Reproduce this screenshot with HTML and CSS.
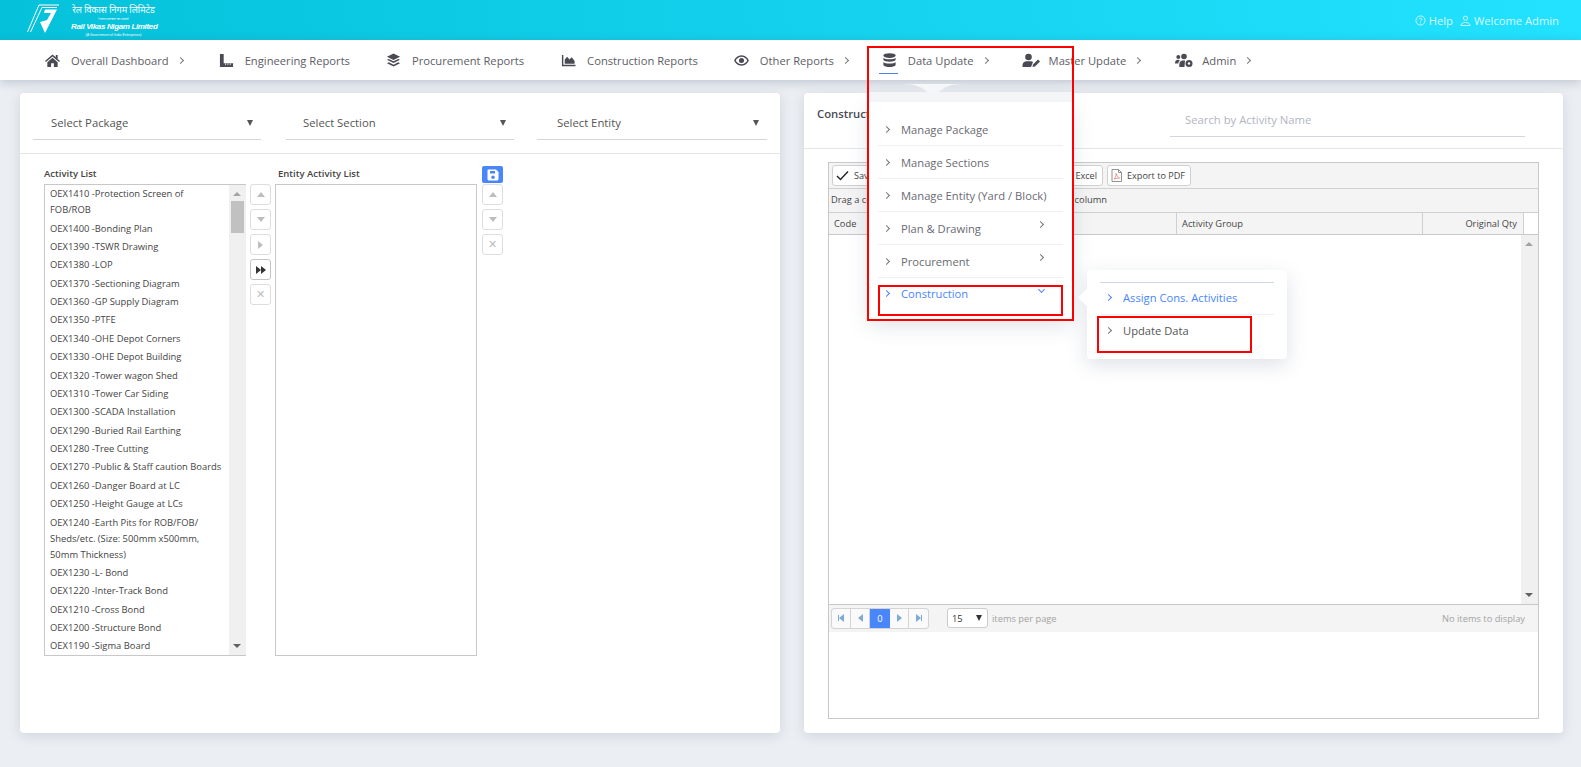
FILE: index.html
```html
<!DOCTYPE html>
<html lang="en">
<head>
    <meta charset="UTF-8">
    <title>Rail Vikas Nigam Limited</title>
    <link rel="stylesheet" href="styles.css">
</head>
<body>
    <header class="topbar">
        <div class="logo">
            <svg class="logo-mark" width="34" height="34" viewBox="0 0 34 34">
                <path d="M0.500 30 L12 3 H32 M3.500 30 L15 5.500 H30" fill="none" stroke="#fff" stroke-width="1"/>
                <path d="M18 7.500 H30 L18 31 L13 20 L20 18 L24 11 H17 Z" fill="#fff"/>
            </svg>
            <div class="logo-text">
                <div class="logo-hi">रेल विकास निगम लिमिटेड</div>
                <div class="logo-sub">(भारत सरकार का उद्यम)</div>
                <div class="logo-en">Rail Vikas Nigam Limited</div>
                <div class="logo-gov">(A Government of India Enterprises)</div>
            </div>
        </div>
        <div class="top-links">
            <svg width="11" height="11" viewBox="0 0 12 12"><circle cx="6" cy="6" r="5" fill="none" stroke="#d8f8ff" stroke-width="1"/><path d="M4.500 4.800 C4.500 3 7.500 3 7.500 4.800 C7.500 6 6 5.800 6 7.200 M6 8.300 V9.200" fill="none" stroke="#d8f8ff" stroke-width="1"/></svg>
            <span class="top-link">Help</span>
            <svg class="user-ico" width="11" height="11" viewBox="0 0 12 12"><circle cx="6" cy="3.500" r="2.300" fill="none" stroke="#d8f8ff" stroke-width="1"/><path d="M1 11.500 C1 7 11 7 11 11.500 Z" fill="none" stroke="#d8f8ff" stroke-width="1"/></svg>
            <span class="top-link">Welcome Admin</span>
        </div>
    </header>

    <nav class="navbar">
        <a class="nav-item n-dash">
            <svg class="nav-ico" viewBox="0 0 16 14"><path d="M8 0.500 L0 7.500 L1 8.700 L8 2.600 L15 8.700 L16 7.500 L13.500 5.300 V1 H11.500 V3.500 Z M8 4 L2.500 8.800 V14 H6.500 V10 H9.500 V14 H13.500 V8.800 Z"/></svg>
            <span>Overall Dashboard</span><i class="chev"></i>
        </a>
        <a class="nav-item n-eng">
            <svg class="nav-ico" viewBox="0 0 16 16"><path d="M1 1 H5 V11 H15 V15 H1 Z"/><path d="M7 11 V13 M9.500 11 V13 M12 11 V13" stroke="#fff" stroke-width="0.800"/></svg>
            <span>Engineering Reports</span>
        </a>
        <a class="nav-item n-proc">
            <svg class="nav-ico" viewBox="0 0 16 16"><path d="M8 0.500 L15 4 L8 7.500 L1 4 Z M1 7.200 L3 6.300 L8 8.800 L13 6.300 L15 7.200 L8 10.700 Z M1 10.800 L3 9.900 L8 12.400 L13 9.900 L15 10.800 L8 14.300 Z"/></svg>
            <span>Procurement Reports</span>
        </a>
        <a class="nav-item n-cons">
            <svg class="nav-ico" viewBox="0 0 16 14"><path d="M1 1 H2.500 V11.500 H15.500 V13 H1 Z"/><path d="M4 10.500 V6 L6.500 3 L9 6 L11.500 3.500 L14.500 7.500 V10.500 Z"/></svg>
            <span>Construction Reports</span>
        </a>
        <a class="nav-item n-other">
            <svg class="nav-ico" viewBox="0 0 16 12"><path fill-rule="evenodd" d="M8 0.500 C12 0.500 14.800 3.500 15.800 6 C14.800 8.500 12 11.500 8 11.500 C4 11.500 1.200 8.500 0.200 6 C1.200 3.500 4 0.500 8 0.500 Z M8 2 C5 2 2.900 4 1.900 6 C2.900 8 5 10 8 10 C11 10 13.100 8 14.100 6 C13.100 4 11 2 8 2 Z"/><circle cx="8" cy="6" r="2.700"/></svg>
            <span>Other Reports</span><i class="chev"></i>
        </a>
        <a class="nav-item n-data active">
            <svg class="nav-ico" viewBox="0 0 14 16"><ellipse cx="7" cy="2.700" rx="6.500" ry="2.500"/><path d="M0.500 5 C2 7.200 12 7.200 13.500 5 V7.500 C12 9.800 2 9.800 0.500 7.500 Z M0.500 9.500 C2 11.700 12 11.700 13.500 9.500 V13 C12 15.600 2 15.600 0.500 13 Z"/></svg>
            <span>Data Update</span><i class="chev"></i>
        </a>
        <a class="nav-item n-master">
            <svg class="nav-ico wide" viewBox="0 0 18 14"><circle cx="6.500" cy="3.500" r="3.300"/><path d="M0.500 13.500 V11.500 C0.500 9 2.500 7.700 4.500 7.700 H8.500 C9.500 7.700 10.500 8 11 8.500 L9 13.500 Z"/><path d="M10.500 13.500 L11 11 L16 6 L18 8 L13 13 Z"/></svg>
            <span>Master Update</span><i class="chev"></i>
        </a>
        <a class="nav-item n-admin">
            <svg class="nav-ico wide" viewBox="0 0 18 14"><circle cx="3.300" cy="3.500" r="2"/><circle cx="9" cy="3" r="2.800"/><path d="M0 10 C0 7 1.500 6.300 3 6.300 C3.800 6.300 4.500 6.700 4.800 7 C3.800 8 3.300 9 3.200 10 Z M4.300 13.500 V11 C4.300 8.500 6 7 7.500 7 H10 L9.500 13.500 Z"/><circle cx="14" cy="10" r="3.500"/><circle cx="14" cy="10" r="1.200" fill="#fff"/></svg>
            <span>Admin</span><i class="chev"></i>
        </a>
    </nav>

    <main class="content">
        <section class="card left-card">
            <div class="select-row">
                <div class="fake-select s1"><span>Select Package</span><b class="tri"></b></div>
                <div class="fake-select s2"><span>Select Section</span><b class="tri"></b></div>
                <div class="fake-select s3"><span>Select Entity</span><b class="tri"></b></div>
            </div>
            <div class="lists">
                <div class="list-col">
                    <div class="list-label">Activity List</div>
                    <div class="listbox with-scroll">
                        <ul class="items">
                            <li>OEX1410 -Protection Screen of<br>FOB/ROB</li>
                            <li>OEX1400 -Bonding Plan</li>
                            <li>OEX1390 -TSWR Drawing</li>
                            <li>OEX1380 -LOP</li>
                            <li>OEX1370 -Sectioning Diagram</li>
                            <li>OEX1360 -GP Supply Diagram</li>
                            <li>OEX1350 -PTFE</li>
                            <li>OEX1340 -OHE Depot Corners</li>
                            <li>OEX1330 -OHE Depot Building</li>
                            <li>OEX1320 -Tower wagon Shed</li>
                            <li>OEX1310 -Tower Car Siding</li>
                            <li>OEX1300 -SCADA Installation</li>
                            <li>OEX1290 -Buried Rail Earthing</li>
                            <li>OEX1280 -Tree Cutting</li>
                            <li>OEX1270 -Public &amp; Staff caution Boards</li>
                            <li>OEX1260 -Danger Board at LC</li>
                            <li>OEX1250 -Height Gauge at LCs</li>
                            <li>OEX1240 -Earth Pits for ROB/FOB/<br>Sheds/etc. (Size: 500mm x500mm,<br>50mm Thickness)</li>
                            <li>OEX1230 -L- Bond</li>
                            <li>OEX1220 -Inter-Track Bond</li>
                            <li>OEX1210 -Cross Bond</li>
                            <li>OEX1200 -Structure Bond</li>
                            <li>OEX1190 -Sigma Board</li>
                        </ul>
                        <div class="scrollbar">
                            <b class="arrow up"></b>
                            <div class="thumb"></div>
                            <b class="arrow down"></b>
                        </div>
                    </div>
                </div>
                <div class="tool-col">
                    <button class="tool"><b class="gl up"></b></button>
                    <button class="tool"><b class="gl down"></b></button>
                    <button class="tool"><b class="gl right"></b></button>
                    <button class="tool dark"><b class="gl right"></b><b class="gl right"></b></button>
                    <button class="tool"><span class="x">✕</span></button>
                </div>
                <div class="list-col entity">
                    <div class="list-label">Entity Activity List</div>
                    <div class="listbox"></div>
                </div>
                <div class="tool-col right-tools">
                    <button class="save-btn">
                        <svg width="12" height="12" viewBox="0 0 12 12"><path fill="#fff" fill-rule="evenodd" d="M1.500 0.500 H9 L11.500 3 V10 C11.500 10.800 10.800 11.500 10 11.500 H2 C1.200 11.500 0.500 10.800 0.500 10 V1.500 C0.500 1 1 0.500 1.500 0.500 Z M3 2 V4.500 H8 V2 Z M6 6.500 A1.800 1.800 0 1 0 6 10.100 A1.800 1.800 0 1 0 6 6.500 Z"/></svg>
                    </button>
                    <button class="tool"><b class="gl up"></b></button>
                    <button class="tool"><b class="gl down"></b></button>
                    <button class="tool"><span class="x">✕</span></button>
                </div>
            </div>
        </section>

        <section class="card right-card">
            <div class="right-head">
                <div class="right-title">Construction Activities</div>
                <div class="search">Search by Activity Name</div>
            </div>
            <div class="grid">
                <div class="grid-toolbar">
                    <button class="grid-btn btn-save">
                        <svg width="13" height="11" viewBox="0 0 13 11"><path d="M1 6 L4.500 9.500 L12 1.500" fill="none" stroke="#222" stroke-width="1.400"/></svg>
                        Save Changes
                    </button>
                    <button class="grid-btn btn-excel">Export to Excel</button>
                    <button class="grid-btn">
                        <svg width="11" height="13" viewBox="0 0 11 13"><path d="M1 0.500 H7.500 L10.500 3.500 V12.500 H1 Z M7.500 0.500 V3.500 H10.500" fill="#fff" stroke="#777" stroke-width="0.800"/><path d="M3 10 C5 8 5.500 6 5 4.500 C6 7 7 8.500 8.500 9 C6.500 9 4.500 9.500 3 10 Z" fill="none" stroke="#d9534f" stroke-width="0.600"/></svg>
                        Export to PDF
                    </button>
                </div>
                <div class="grid-group">Drag a column header and drop it here to group by that column</div>
                <div class="grid-header">
                    <div class="th th-code">Code</div>
                    <div class="th th-group">Activity Group</div>
                    <div class="th th-qty">Original Qty</div>
                    <div class="th th-sp"></div>
                </div>
                <div class="grid-body">
                    <div class="grid-scroll">
                        <b class="arrow up"></b>
                        <b class="arrow down"></b>
                    </div>
                </div>
                <div class="pager">
                    <div class="pager-btns">
                        <span class="pg"><b class="gl-blue first"></b></span>
                        <span class="pg"><b class="gl-blue left"></b></span>
                        <span class="pg current">0</span>
                        <span class="pg"><b class="gl-blue right"></b></span>
                        <span class="pg"><b class="gl-blue last"></b></span>
                    </div>
                    <div class="page-size"><span>15</span><b class="tri"></b></div>
                    <span class="pager-info">items per page</span>
                    <span class="pager-info pager-end">No items to display</span>
                </div>
            </div>
        </section>
    </main>

    <div class="menu-notch">
        <svg width="60" height="13" viewBox="0 0 60 13"><path d="M0 0 C12 0 20 3 26 10 C28 12.500 32 12.500 34 10 C40 3 48 0 60 0 Z" fill="#f6f7f9"/></svg>
    </div>
    <div class="drop-menu">
        <div class="menu-row"><i class="chev"></i>Manage Package</div>
        <div class="menu-row"><i class="chev"></i>Manage Sections</div>
        <div class="menu-row"><i class="chev"></i>Manage Entity (Yard / Block)</div>
        <div class="menu-row"><i class="chev"></i>Plan &amp; Drawing<i class="chev side"></i></div>
        <div class="menu-row"><i class="chev"></i>Procurement<i class="chev side"></i></div>
        <div class="menu-row open"><i class="chev"></i>Construction<i class="chev side down"></i></div>
    </div>
    <div class="sub-menu">
        <div class="sub-row open"><i class="chev"></i>Assign Cons. Activities</div>
        <div class="sub-row last"><i class="chev"></i>Update Data</div>
    </div>

    <div class="red-box rb-menu"></div>
    <div class="red-box rb-cons"></div>
    <div class="red-box rb-update"></div>
</body>
</html>
```

FILE: styles.css
```css
* {
    box-sizing: border-box;
}

html, body {
    margin: 0;
    height: 767px;
    overflow: hidden;
}

body {
    position: relative;
    font-family: "Open Sans", "Noto Sans", Arial, sans-serif;
    background-color: #ebeef3;
    color: #444;
}

.topbar {
    height: 40px;
    background: linear-gradient(90deg, #05c1da, #22e2ff);
    display: flex;
    align-items: center;
    justify-content: space-between;
    padding: 0 22px 0 27px;
}

.logo {
    display: flex;
    align-items: flex-start;
    color: #fff;
    height: 40px;
}

.logo-mark {
    margin-top: 2px;
}

.logo-text {
    margin-left: 10px;
    width: 85px;
    text-align: center;
}

.logo-hi {
    font-family: "Noto Sans", "Liberation Sans", sans-serif;
    font-size: 9px;
    line-height: 14px;
    margin-top: 3px;
    white-space: nowrap;
}

.logo-sub {
    font-family: "Noto Sans", "Liberation Sans", sans-serif;
    font-size: 3.500px;
    line-height: 4px;
}

.logo-en {
    font-family: "Liberation Sans", Arial, sans-serif;
    font-size: 8px;
    letter-spacing: -0.350px;
    font-style: italic;
    font-weight: bold;
    line-height: 11px;
    white-space: nowrap;
}

.logo-gov {
    font-family: "Liberation Sans", Arial, sans-serif;
    font-size: 3.500px;
    line-height: 6px;
}

.top-links {
    display: flex;
    align-items: center;
    color: #d8f8ff;
    font-size: 11.200px;
}

.top-link {
    margin-left: 3px;
}

.user-ico {
    margin-left: 7px;
}

.navbar {
    height: 40px;
    background: #fff;
    display: flex;
    align-items: center;
    padding-left: 45px;
    box-shadow: 0 2px 10px rgba(80, 95, 120, 0.3);
    position: relative;
    z-index: 2;
}

.nav-item {
    display: flex;
    align-items: center;
    font-size: 11.200px;
    color: #5d5d66;
    height: 40px;
    position: relative;
    white-space: nowrap;
}

.nav-ico {
    width: 15px;
    height: 15px;
    fill: #4a4a55;
    margin-right: 11px;
    flex: none;
}

.nav-ico.wide {
    width: 18px;
    margin-right: 9px;
}

.chev {
    display: inline-block;
    width: 5px;
    height: 5px;
    border-top: 1px solid #777;
    border-right: 1px solid #777;
    transform: rotate(45deg);
    margin-left: 9px;
}

.n-dash { margin-right: 36px; }
.n-eng { margin-right: 36px; }
.n-proc { margin-right: 37px; }
.n-cons { margin-right: 36px; }
.n-other { margin-right: 34px; }
.n-data { margin-right: 34px; }
.n-master { margin-right: 35px; }

.n-data::after {
    content: "";
    position: absolute;
    left: -3px;
    top: 33px;
    width: 19px;
    height: 1px;
    background: #4f7fe8;
}

.content {
    display: flex;
    justify-content: space-between;
    padding: 13px 18px 0 20px;
}

.card {
    background: #fff;
    border-radius: 4px;
    height: 640px;
    box-shadow: 0 3px 12px rgba(90, 105, 130, 0.18);
}

.left-card {
    width: 760px;
}

.right-card {
    width: 759px;
    position: relative;
}

.select-row {
    height: 61px;
    border-bottom: 1px solid #e4e6ea;
    padding: 13px 13px 0;
    display: flex;
}

.fake-select {
    height: 34px;
    border-bottom: 1px solid #d3d6dc;
    padding: 0 8px 0 18px;
    display: flex;
    align-items: center;
    justify-content: space-between;
    font-size: 11.300px;
    color: #555;
}

.s1 { width: 228px; margin-right: 25px; }
.s2 { width: 228px; margin-right: 23px; padding-left: 17px; }
.s3 { width: 230px; padding-left: 20px; }

.tri {
    width: 0;
    height: 0;
    border-left: 3.500px solid transparent;
    border-right: 3.500px solid transparent;
    border-top: 6px solid #555;
}

.lists {
    display: flex;
    padding: 12px 0 0 24px;
}

.list-col {
    width: 202px;
}

.list-label {
    height: 18px;
    font-size: 9.500px;
    font-weight: 600;
    color: #444;
    line-height: 16px;
}

.entity .list-label {
    padding-left: 3px;
}

.listbox {
    height: 472px;
    border: 1px solid #c8c8c8;
    background: #fff;
    display: flex;
    overflow: hidden;
}

.with-scroll {
    border-right: 0;
}

.items {
    list-style: none;
    margin: 0;
    padding: 0 0 0 5px;
    flex: 1;
    font-size: 9.400px;
    color: #444;
    line-height: 16px;
}

.items li {
    padding: 1.200px 0;
}

.scrollbar {
    width: 17px;
    height: 100%;
    background: #f0f0f0;
    position: relative;
    flex: none;
}

.arrow {
    position: absolute;
    left: 4px;
    width: 0;
    height: 0;
    border-left: 4px solid transparent;
    border-right: 4px solid transparent;
}

.arrow.up {
    top: 7px;
    border-bottom: 4px solid #a3a3a3;
}

.arrow.down {
    bottom: 7px;
    border-top: 4px solid #606060;
}

.thumb {
    position: absolute;
    top: 16px;
    left: 2px;
    width: 13px;
    height: 32px;
    background: #c1c1c1;
}

.tool-col {
    width: 29px;
    padding: 18px 0 0 4px;
    display: flex;
    flex-direction: column;
    gap: 4px;
}

.tool {
    width: 21px;
    height: 21px;
    padding: 0;
    background: #fff;
    border: 1px solid #ddd;
    border-radius: 3px;
    display: flex;
    align-items: center;
    justify-content: center;
}

.tool.dark {
    border-color: #c4c4c4;
}

.gl {
    width: 0;
    height: 0;
    border-style: solid;
    border-color: transparent;
}

.gl.up {
    border-width: 0 4px 5px;
    border-bottom-color: #bdbdbd;
}

.gl.down {
    border-width: 5px 4px 0;
    border-top-color: #bdbdbd;
}

.gl.right {
    border-width: 4px 0 4px 5px;
    border-left-color: #bdbdbd;
}

.dark .gl.right {
    border-left-color: #333;
}

.x {
    font-size: 11px;
    line-height: 1;
    color: #bdbdbd;
    font-weight: bold;
    font-family: "DejaVu Sans", sans-serif;
}

.right-tools {
    padding: 0 0 0 5px;
    width: 27px;
    gap: 4px;
    margin-top: 0;
}

.save-btn {
    width: 21px;
    height: 17px;
    padding: 0;
    background: #4a86fb;
    border: 0;
    border-radius: 2px;
    display: flex;
    align-items: center;
    justify-content: center;
    margin-bottom: -3px;
}

.right-head {
    height: 56px;
    border-bottom: 1px solid #e4e6ea;
    padding: 0 38px 0 13px;
    display: flex;
    justify-content: space-between;
}

.right-title {
    font-size: 11.300px;
    font-weight: 600;
    color: #4a4a52;
    padding-top: 13px;
}

.search {
    width: 355px;
    height: 44px;
    border-bottom: 1px solid #d3d6dc;
    padding: 19px 0 0 15px;
    font-size: 11.300px;
    color: #b2b5bf;
}

.grid {
    margin: 13px 24px 0;
    height: 557px;
    border: 1px solid #c8c8c8;
    background: #fff;
}

.grid-toolbar {
    height: 26px;
    background: #f4f4f4;
    border-bottom: 1px solid #d0d0d0;
    display: flex;
    align-items: center;
    padding-left: 3px;
    gap: 4px;
}

.grid-btn {
    height: 21px;
    background: #fff;
    border: 1px solid #d0d0d0;
    border-radius: 3px;
    font-family: inherit;
    font-size: 9.100px;
    color: #444;
    padding: 0 5px 0 3px;
    display: flex;
    align-items: center;
    gap: 5px;
    white-space: nowrap;
}

.btn-save {
    width: 113px;
}

.btn-excel {
    width: 154px;
    justify-content: flex-end;
}

.grid-group {
    height: 24px;
    background: #f4f4f4;
    border-bottom: 1px solid #d0d0d0;
    font-size: 9.300px;
    line-height: 22px;
    padding-left: 2px;
}

.grid-header {
    height: 22px;
    display: flex;
    border-bottom: 1px solid #c8c8c8;
    background: #f4f4f4;
    font-size: 9.300px;
    line-height: 21px;
}

.th {
    padding: 0 5px;
    border-right: 1px solid #d0d0d0;
}

.th-code { width: 348px; }
.th-group { width: 246px; }
.th-qty { width: 101px; text-align: right; padding-right: 6px; }
.th-sp { flex: 1; background: #fff; border-right: 0; }

.grid-body {
    height: 370px;
    border-bottom: 1px solid #c8c8c8;
    position: relative;
}

.grid-scroll {
    position: absolute;
    right: 0;
    top: 0;
    bottom: 0;
    width: 17px;
    background: #f0f0f0;
}

.pager {
    height: 27px;
    background: #f4f4f4;
    display: flex;
    align-items: center;
    padding: 0 13px 1px 2px;
    font-size: 9.300px;
}

.pager-btns {
    display: flex;
    height: 21px;
    border: 1px solid #d4d4d4;
    border-radius: 3px;
    background: #fafafa;
}

.pg {
    width: 19px;
    display: flex;
    align-items: center;
    justify-content: center;
    border-right: 1px solid #d4d4d4;
}

.pg:last-child {
    border-right: 0;
}

.pg.current {
    background: #4a86fb;
    color: #fff;
    border-right: 0;
    width: 20px;
}

.gl-blue {
    width: 0;
    height: 0;
    border-style: solid;
    border-color: transparent;
}

.gl-blue.left {
    border-width: 4px 5px 4px 0;
    border-right-color: #7fa9d6;
}

.gl-blue.right {
    border-width: 4px 0 4px 5px;
    border-left-color: #7fa9d6;
}

.gl-blue.first {
    border-width: 4px 5px 4px 0;
    border-right-color: #7fa9d6;
    box-shadow: -2px 0 0 -1px #7fa9d6;
}

.gl-blue.last {
    border-width: 4px 0 4px 5px;
    border-left-color: #7fa9d6;
    box-shadow: 2px 0 0 -1px #7fa9d6;
}

.page-size {
    width: 41px;
    height: 20px;
    margin-left: 18px;
    background: #fff;
    border: 1px solid #ccc;
    border-radius: 3px;
    display: flex;
    align-items: center;
    justify-content: space-between;
    padding: 0 5px 0 4px;
    color: #333;
}

.page-size .tri {
    border-top-color: #333;
}

.pager-info {
    color: #a3a3a3;
    margin-left: 4px;
}

.pager-end {
    margin-left: auto;
}

.menu-notch {
    position: absolute;
    left: 903px;
    top: 80px;
    width: 60px;
    height: 13px;
    z-index: 3;
}

.drop-menu {
    position: absolute;
    left: 869px;
    top: 102px;
    width: 203px;
    height: 217px;
    padding: 11px 9px 0;
    background: #fff;
    box-shadow: 0 6px 20px rgba(90, 105, 130, 0.2);
    z-index: 3;
}

.drop-menu::before {
    content: "";
    position: absolute;
    left: 0;
    right: 0;
    top: -10px;
    height: 10px;
    background: #f3f5f7;
}

.menu-row {
    height: 33px;
    border-bottom: 1px solid #eeeff1;
    display: flex;
    align-items: center;
    padding-left: 6px;
    font-size: 11.200px;
    color: #6a6a73;
    position: relative;
}

.menu-row > .chev:first-child {
    margin: 0 12px 0 0;
    flex: none;
}

.chev.side {
    position: absolute;
    left: 160px;
    top: 10px;
    margin: 0;
}

.chev.side.down {
    transform: rotate(135deg);
    border-color: #4a86fb;
    top: 9px;
    left: 161px;
}

.menu-row.open {
    border-bottom: 0;
    color: #4a86fb;
    align-items: flex-start;
    padding-top: 8px;
}

.menu-row.open > .chev:first-child {
    border-color: #4a86fb;
    margin-top: 5px;
}

.sub-menu {
    position: absolute;
    left: 1087px;
    top: 270px;
    width: 200px;
    height: 89px;
    padding: 12px 13px 0;
    background: #fff;
    border-radius: 4px;
    box-shadow: 0 6px 20px rgba(90, 105, 130, 0.2);
    z-index: 3;
}

.sub-menu::before {
    content: "";
    position: absolute;
    left: -6px;
    top: 21px;
    width: 13px;
    height: 13px;
    background: #fff;
    transform: rotate(45deg);
}

.sub-row {
    height: 33px;
    border-bottom: 1px solid #eeeff1;
    display: flex;
    align-items: center;
    padding: 0 0 2px 6px;
    font-size: 11.200px;
    color: #555;
    position: relative;
}

.sub-row > .chev {
    margin: 0 12px 0 0;
}

.sub-row.open {
    border-top: 1px solid #cfd6e6;
    color: #4a86fb;
}

.sub-row.open > .chev {
    border-color: #4a86fb;
}

.sub-row.last {
    border-bottom: 0;
}

.red-box {
    position: absolute;
    border: 2px solid #f00;
    z-index: 4;
}

.rb-menu {
    left: 867px;
    top: 46px;
    width: 207px;
    height: 275px;
}

.rb-cons {
    left: 878px;
    top: 285px;
    width: 185px;
    height: 31px;
}

.rb-update {
    left: 1097px;
    top: 316px;
    width: 155px;
    height: 37px;
}
```
